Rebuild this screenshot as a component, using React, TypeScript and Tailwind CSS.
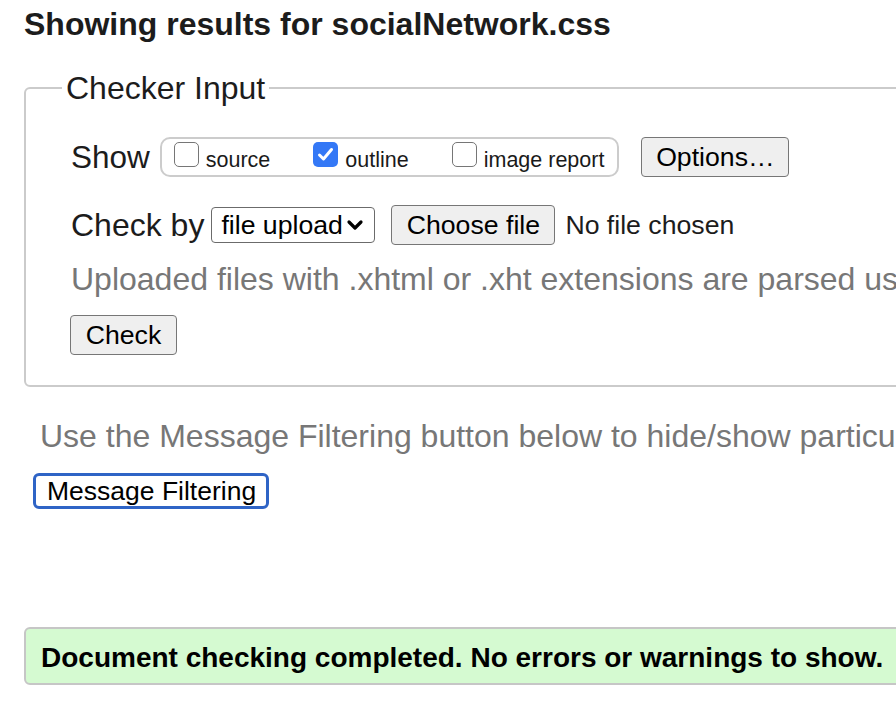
import React from "react";

function Box({ checked }: { checked?: boolean }) {
  if (checked) {
    return (
      <div className="w-[25px] h-[25px] mb-[6px] shrink-0 rounded-[5px] bg-[#3478f6] flex items-center justify-center">
        <svg width="17" height="15" viewBox="0 0 17 15" fill="none">
          <polyline points="2.5,8 6.5,12 14.5,2.5" stroke="white" strokeWidth="3" strokeLinecap="round" strokeLinejoin="round" />
        </svg>
      </div>
    );
  }
  return <div className="w-[25px] h-[25px] mb-[6px] shrink-0 rounded-[5px] border-[1.5px] border-[#767676] bg-white" />;
}

function Option({ label, checked }: { label: string; checked?: boolean }) {
  return (
    <label className="flex items-end gap-[7px]">
      <Box checked={checked} />
      <span className="text-[21.5px] leading-[26px] text-[#1a1a1a]">{label}</span>
    </label>
  );
}

const btn =
  "h-[40px] rounded-[4px] border-[1.5px] border-[#767676] bg-[#efefef] text-[26.67px] leading-[30px] text-black flex items-center justify-center";

export default function App() {
  return (
    <div className="w-[896px] h-[704px] overflow-hidden bg-white whitespace-nowrap font-['Liberation_Sans',Arial,sans-serif] text-[#1c1c1c]">
      <h2 className="pt-[6px] pl-[24px] text-[32px] leading-[36px] font-bold">
        Showing results for socialNetwork.css
      </h2>

      <fieldset className="mt-[28px] ml-[24px] w-[1000px] border-2 border-[#cbcbcb] rounded-[6px] pl-[45px] pt-[30px] pb-[30px]">
        <legend className="-ml-[9px] px-[4px] text-[32px] leading-[36px]">Checker Input</legend>

        <div className="flex items-center h-[42px]">
          <span className="text-[31.5px] leading-[36px]">Show</span>
          <div className="ml-[10px] h-[40px] rounded-[10px] border-2 border-[#cccccc] flex items-center pl-[12px] pr-[13px] gap-[43px]">
            <Option label="source" />
            <Option label="outline" checked />
            <Option label="image report" />
          </div>
          <button className={btn + " ml-[22px] w-[148px]"}>Options…</button>
        </div>

        <div className="flex items-center h-[42px] mt-[26px]">
          <span className="text-[32px] leading-[36px]">Check by</span>
          <div className="ml-[7px] w-[164px] h-[36px] rounded-[4px] border-[1.5px] border-[#6b6b6b] bg-white flex items-center pl-[9px] pr-[10px] text-[26.67px] leading-[30px] text-black">
            <span className="flex-1">file upload</span>
            <svg width="18" height="12" viewBox="0 0 18 12" fill="none">
              <polyline points="3,3 9,9 15,3" stroke="black" strokeWidth="3.2" strokeLinecap="round" strokeLinejoin="round" />
            </svg>
          </div>
          <button className={btn + " ml-[16px] w-[164px]"}>Choose file</button>
          <span className="ml-[10px] text-[26.67px] leading-[30px]">No file chosen</span>
        </div>

        <p className="mt-[15px] text-[32px] leading-[36px] text-[#777777]">
          Uploaded files with .xhtml or .xht extensions are parsed using the XML parser.
        </p>

        <button className={btn + " mt-[18px] -ml-[1px] w-[107px]"}>Check</button>
      </fieldset>

      <p className="mt-[31px] pl-[40px] text-[32px] leading-[36px] text-[#777777]">
        Use the Message Filtering button below to hide/show particular messages, and to see total counts of errors and warnings.
      </p>

      <div className="pl-[33px] mt-[19px]">
        <button className="w-[236px] h-[36px] rounded-[6px] border-[3px] border-[#2f64c6] bg-white text-[26.5px] leading-[30px] text-black flex items-center pl-[11px]">
          Message Filtering
        </button>
      </div>

      <div className="mt-[118px] ml-[24px] w-[1000px] h-[58px] rounded-[6px] border-2 border-[#c6c6c6] bg-[#d5fad1] flex items-center pl-[15px] pt-[3px]">
        <span className="text-[28px] leading-[32px] font-bold text-black">
          Document checking completed. No errors or warnings to show.
        </span>
      </div>
    </div>
  );
}
